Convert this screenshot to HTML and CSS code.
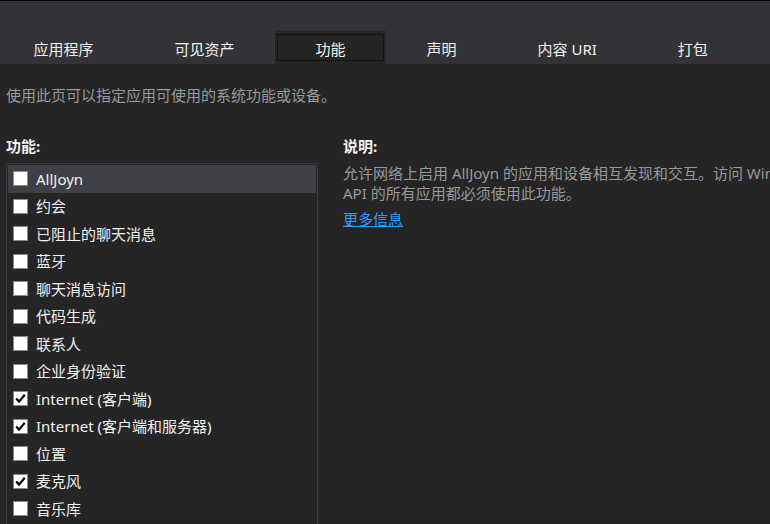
FILE: index.html
```html
<!DOCTYPE html>
<html lang="zh-CN">
<head>
<meta charset="utf-8">
<title>功能</title>
<link rel="stylesheet" href="styles.css">
</head>
<body>
<div class="tabbar">
  <div class="tab tab-first">应用程序</div>
  <div class="tab">可见资产</div>
  <div class="tab active">功能</div>
  <div class="tab">声明</div>
  <div class="tab">内容 URI</div>
  <div class="tab">打包</div>
</div>
<div class="page">
  <p class="intro">使用此页可以指定应用可使用的系统功能或设备。</p>
  <div class="columns">
    <div class="left">
      <div class="label">功能:</div>
      <div class="list">
        <div class="row selected"><span class="box"></span><span class="text">AllJoyn</span></div>
        <div class="row"><span class="box"></span><span class="text">约会</span></div>
        <div class="row"><span class="box"></span><span class="text">已阻止的聊天消息</span></div>
        <div class="row"><span class="box"></span><span class="text">蓝牙</span></div>
        <div class="row"><span class="box"></span><span class="text">聊天消息访问</span></div>
        <div class="row"><span class="box"></span><span class="text">代码生成</span></div>
        <div class="row"><span class="box"></span><span class="text">联系人</span></div>
        <div class="row"><span class="box"></span><span class="text">企业身份验证</span></div>
        <div class="row"><span class="box"><svg viewBox="0 0 13 13" width="13" height="13"><path d="M2.2 6.6 L5 9.6 L10.8 2.8" fill="none" stroke="#000" stroke-width="2.2"/></svg></span><span class="text">Internet (客户端)</span></div>
        <div class="row"><span class="box"><svg viewBox="0 0 13 13" width="13" height="13"><path d="M2.2 6.6 L5 9.6 L10.8 2.8" fill="none" stroke="#000" stroke-width="2.2"/></svg></span><span class="text">Internet (客户端和服务器)</span></div>
        <div class="row"><span class="box"></span><span class="text">位置</span></div>
        <div class="row"><span class="box"><svg viewBox="0 0 13 13" width="13" height="13"><path d="M2.2 6.6 L5 9.6 L10.8 2.8" fill="none" stroke="#000" stroke-width="2.2"/></svg></span><span class="text">麦克风</span></div>
        <div class="row"><span class="box"></span><span class="text">音乐库</span></div>
      </div>
    </div>
    <div class="right">
      <div class="label">说明:</div>
      <p class="desc">允许网络上启用 AllJoyn 的应用和设备相互发现和交互。访问 Windows.Devices.AllJoyn<br>API 的所有应用都必须使用此功能。</p>
      <a class="more" href="#">更多信息</a>
    </div>
  </div>
</div>
</body>
</html>
```

FILE: styles.css
```css
html, body {
  margin: 0;
  padding: 0;
}
body {
  width: 770px;
  height: 524px;
  overflow: hidden;
  background: #252526;
  color: #f1f1f1;
  font-family: "Noto Sans", "Noto Sans CJK SC", sans-serif;
  font-size: 15px;
}
.tabbar {
  display: flex;
  align-items: flex-end;
  height: 63px;
  border-top: 1px solid #000;
  background: #333337;
  white-space: nowrap;
}
.tab {
  position: relative;
  height: 33px;
  padding: 2px 40.5px 0;
  box-sizing: border-box;
  display: flex;
  align-items: center;
  line-height: 20px;
  color: #f1f1f1;
}
.tab-first {
  margin-left: -7px;
}
.tab.active {
  background: #252526;
}
.tab.active::after {
  content: "";
  position: absolute;
  top: 3px;
  left: 2px;
  right: 2px;
  bottom: 3px;
  border: 1px dotted #000;
}
.page {
  padding-left: 6px;
}
.intro {
  margin: 21px 0 0;
  line-height: 20px;
  color: #999999;
}
.columns {
  display: flex;
  margin-top: 31px;
}
.left {
  width: 312px;
  flex: none;
}
.label {
  font-weight: bold;
  line-height: 20px;
  color: #f1f1f1;
}
.left .label {
  margin-bottom: 7px;
}
.list {
  border: 1px solid #3a3a3e;
  padding: 1px 1px 0;
  height: 400px;
}
.row {
  display: flex;
  align-items: center;
  height: 27.5px;
  padding-left: 5px;
  white-space: nowrap;
}
.row.selected {
  background: #3f3f46;
}
.box {
  width: 15px;
  height: 15px;
  box-sizing: border-box;
  border: 1.5px solid #8a8a8a;
  background: #ffffff;
  display: flex;
  align-items: center;
  justify-content: center;
  flex: none;
}
.box svg {
  display: block;
}
.text {
  margin-left: 8px;
  line-height: 20px;
  color: #f1f1f1;
}
.right {
  margin-left: 25px;
  flex: none;
}
.desc {
  margin: 8px 0 0;
  line-height: 19.5px;
  color: #999999;
  white-space: nowrap;
}
.more {
  display: inline-block;
  margin-top: 6px;
  line-height: 20px;
  color: #3399ff;
  text-decoration: underline;
}
```
